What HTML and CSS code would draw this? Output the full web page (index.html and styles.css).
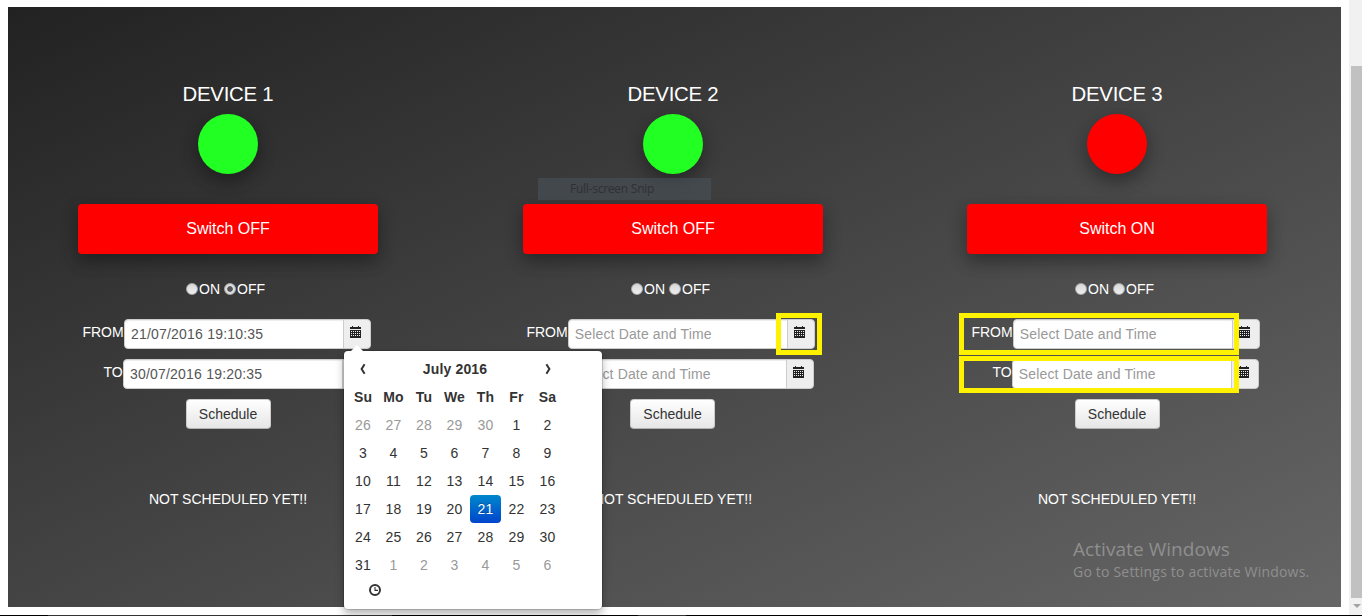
FILE: index.html
```html
<!DOCTYPE html>
<html lang="en">
<head>
<meta charset="utf-8">
<title>Device scheduler</title>
<link rel="stylesheet" href="styles.css">
</head>
<body>
<svg class="defs" aria-hidden="true">
  <symbol id="calendar" viewBox="0 0 12 12" shape-rendering="crispEdges">
    <path fill="#222" d="M2 0h1v1h5V0h1v1h2v2H0V1h2z"/>
    <path fill="#222" fill-rule="evenodd" d="M0 4h11v8H0zM1 5v1h1V5zm2 0v1h1V5zm2 0v1h1V5zm2 0v1h1V5zm2 0v1h1V5zM1 7v1h1V7zm2 0v1h1V7zm2 0v1h1V7zm2 0v1h1V7zm2 0v1h1V7zM1 9v1h1V9zm2 0v1h1V9zm2 0v1h1V9zm2 0v1h1V9zm2 0v1h1V9z"/>
  </symbol>
</svg>
<div class="page">
  <main class="panel">
    <section class="device">
      <h2 class="name">DEVICE 1</h2>
      <div class="lamp on"></div>
      <button class="switch">Switch OFF</button>
      <div class="radios"><i class="radio"></i><span>ON</span><i class="radio checked"></i><span>OFF</span></div>
      <div class="row from"><label>FROM</label><div class="field">21/07/2016 19:10:35</div><div class="addon"><svg><use href="#calendar"/></svg></div></div>
      <div class="row to"><label>TO</label><div class="field">30/07/2016 19:20:35</div><div class="addon"><svg><use href="#calendar"/></svg></div></div>
      <button class="schedule">Schedule</button>
      <p class="status">NOT SCHEDULED YET!!</p>
    </section>
    <section class="device second">
      <h2 class="name">DEVICE 2</h2>
      <div class="lamp on"></div>
      <button class="switch">Switch OFF</button>
      <div class="radios"><i class="radio"></i><span>ON</span><i class="radio"></i><span>OFF</span></div>
      <div class="row from"><label>FROM</label><div class="field empty">Select Date and Time</div><div class="addon"><svg><use href="#calendar"/></svg></div></div>
      <div class="row to"><label>TO</label><div class="field empty">Select Date and Time</div><div class="addon"><svg><use href="#calendar"/></svg></div></div>
      <button class="schedule">Schedule</button>
      <p class="status">NOT SCHEDULED YET!!</p>
    </section>
    <section class="device third">
      <h2 class="name">DEVICE 3</h2>
      <div class="lamp"></div>
      <button class="switch">Switch ON</button>
      <div class="radios"><i class="radio"></i><span>ON</span><i class="radio"></i><span>OFF</span></div>
      <div class="row from"><label>FROM</label><div class="field empty">Select Date and Time</div><div class="addon"><svg><use href="#calendar"/></svg></div></div>
      <div class="row to"><label>TO</label><div class="field empty">Select Date and Time</div><div class="addon"><svg><use href="#calendar"/></svg></div></div>
      <button class="schedule">Schedule</button>
      <p class="status">NOT SCHEDULED YET!!</p>
    </section>
  </main>
  <aside class="scrollbar"><div class="thumb"></div><div class="arrow"></div></aside>
</div>
<footer class="edge"></footer>

<div class="snip">Full-screen Snip</div>
<div class="watermark"><div class="big">Activate Windows</div><div class="small">Go to Settings to activate Windows.</div></div>
<div class="mark mark-icon"></div>
<div class="mark mark-from"></div>
<div class="mark mark-to"></div>

<div class="picker">
  <div class="grid">
    <svg class="nav" viewBox="0 0 8 12"><path d="M5.6 1.2L2.6 6L5.6 10.8"/></svg><b class="month">July 2016</b><svg class="nav" viewBox="0 0 8 12"><path d="M2.4 1.2L5.4 6L2.4 10.8"/></svg>
    <b>Su</b><b>Mo</b><b>Tu</b><b>We</b><b>Th</b><b>Fr</b><b>Sa</b>
    <span class="old">26</span><span class="old">27</span><span class="old">28</span><span class="old">29</span><span class="old">30</span><span>1</span><span>2</span>
    <span>3</span><span>4</span><span>5</span><span>6</span><span>7</span><span>8</span><span>9</span>
    <span>10</span><span>11</span><span>12</span><span>13</span><span>14</span><span>15</span><span>16</span>
    <span>17</span><span>18</span><span>19</span><span>20</span><span class="active">21</span><span>22</span><span>23</span>
    <span>24</span><span>25</span><span>26</span><span>27</span><span>28</span><span>29</span><span>30</span>
    <span>31</span><span class="old">1</span><span class="old">2</span><span class="old">3</span><span class="old">4</span><span class="old">5</span><span class="old">6</span>
  </div>
  <svg class="clock" viewBox="0 0 12 12"><circle cx="6" cy="6" r="5"/><path d="M6 3v3.4h3" /></svg>
</div>
</body>
</html>
```
FILE: styles.css
```css
* { box-sizing: border-box; }
body {
  margin: 0;
  width: 1362px;
  height: 616px;
  overflow: hidden;
  position: relative;
  background: #fff;
  color: #fff;
  font: 14px/20px "Liberation Sans", Arial, sans-serif;
}
.defs { display: none; }
.page { display: flex; height: 615px; padding-left: 8px; }
.panel {
  display: flex;
  width: 1333px;
  height: 600px;
  margin: 7px 8px 0 0;
  background: linear-gradient(to bottom right, #222, #666);
}
.device {
  flex: 0 0 444px;
  display: flex;
  flex-direction: column;
  align-items: center;
  padding: 72px 4px 0 0;
}
.device.second { flex-basis: 446px; }
.device.third { flex-basis: 442px; }
.name { margin: 0; font-size: 20.4px; font-weight: normal; line-height: 30px; letter-spacing: -.25px; }
.lamp {
  width: 60px;
  height: 60px;
  margin-top: 5px;
  border-radius: 50%;
  background: #f00;
  box-shadow: 0 8px 16px rgba(0,0,0,.2), 0 6px 20px rgba(0,0,0,.19);
}
.lamp.on { background: #22ff22; }
.switch {
  width: 300px;
  height: 50px;
  margin-top: 30px;
  padding: 0;
  border: 0;
  border-radius: 4px;
  background: #f00;
  color: #fff;
  font: 16px "Liberation Sans", Arial, sans-serif;
  box-shadow: 0 8px 16px rgba(0,0,0,.2), 0 6px 20px rgba(0,0,0,.19);
}
.radios { display: flex; align-items: center; width: 84px; height: 20px; margin: 25px 0 20px; }
.radios span { width: 25px; }
.radio {
  width: 12px;
  height: 12px;
  margin-right: 1px;
  border: 1px solid #aaa;
  border-radius: 50%;
  background: linear-gradient(#d8d8d8, #eee);
}
.radio.checked { background: radial-gradient(circle, #555 0 2.4px, #ddd 3.2px); }
.row { display: flex; width: 300px; height: 30px; margin-bottom: 10px; }
.from { padding-left: 4px; }
.to { padding-left: 3px; }
.second .from { padding-left: 3px; }
.second .to { padding-left: 2px; }
.row label { width: 42px; height: 26px; padding-right: .4px; line-height: 26px; text-align: right; white-space: nowrap; }
.field {
  width: 220px;
  padding: 4px 6px;
  border: 1px solid #ccc;
  border-radius: 4px 0 0 4px;
  background: #fff;
  color: #555;
  letter-spacing: .2px;
  box-shadow: inset 0 1px 1px rgba(0,0,0,.075);
}
.field.empty { padding-left: 5.8px; color: #999; letter-spacing: .15px; }
.addon {
  width: 28px;
  margin-left: -1px;
  padding: 6px;
  border: 1px solid #ccc;
  border-radius: 0 4px 4px 0;
  background: #eee;
}
.addon svg { display: block; width: 12px; height: 12px; }
.schedule {
  width: 85px;
  height: 30px;
  padding: 0;
  border: 1px solid #ccc;
  border-bottom-color: #b3b3b3;
  border-radius: 4px;
  background: linear-gradient(#fff, #e6e6e6);
  color: #333;
  font: 14px "Liberation Sans", Arial, sans-serif;
}
.second .schedule { margin-right: 1px; }
.status { margin: 60px 0 0; }
.scrollbar {
  display: flex;
  flex-direction: column;
  width: 13px;
  padding: 66px 0 0 2px;
  background: #f1f1f1;
}
.thumb { height: 532px; background: #c1c1c1; }
.arrow { margin: 6px 0 0 2px; width: 0; border: 4px solid transparent; border-top-color: #a3a3a3; border-bottom: 0; }
.edge {
  height: 1px;
  background: linear-gradient(90deg, #000 48px, #333 48px 392px, #000 392px 638px, #333 638px 686px, #000 686px);
}

.snip {
  position: absolute;
  left: 538px;
  top: 178px;
  width: 173px;
  height: 22px;
  padding-left: 32px;
  background: rgba(70,80,86,.65);
  color: #303134;
  font: 12px/22px "Open Sans", sans-serif;
  letter-spacing: -.25px;
  white-space: nowrap;
}
.watermark {
  position: absolute;
  left: 1073px;
  top: 536px;
  color: #8f8f8f;
  font-family: "Open Sans", sans-serif;
  white-space: nowrap;
}
.big { font-size: 19px; line-height: 26px; letter-spacing: .06px; }
.small { font-size: 14px; line-height: 20px; letter-spacing: .2px; }
.mark { position: absolute; border: 5px solid #fff200; }
.mark-icon { left: 776px; top: 313px; width: 46px; height: 42px; }
.mark-from { left: 959px; top: 313px; width: 280px; height: 42px; }
.mark-to { left: 959px; top: 356px; width: 280px; height: 37px; }

.picker {
  position: absolute;
  left: 344px;
  top: 351px;
  width: 258px;
  height: 258px;
  padding: 4px;
  border-radius: 4px;
  background: #fff;
  color: #333;
  box-shadow: 0 0 0 1px rgba(0,0,0,.15), 0 5px 10px rgba(0,0,0,.3);
}
.picker::before {
  content: "";
  position: absolute;
  left: 7px;
  top: -6px;
  border: 6px solid transparent;
  border-top: 0;
  border-bottom-color: #fff;
}
.grid {
  display: grid;
  grid-template-columns: 30px 31px 30px 31px 31px 31px 31px;
  grid-auto-rows: 28px;
  line-height: 28px;
  text-align: center;
  letter-spacing: .15px;
}
.month { grid-column: span 5; }
.nav { width: 8px; height: 12px; place-self: center; fill: none; stroke: #333; stroke-width: 2; }
.old { color: #999; }
.active {
  border-radius: 4px;
  background: linear-gradient(#08c, #04c);
  color: #fff;
  text-shadow: 0 -1px 0 rgba(0,0,0,.25);
}
.clock { display: block; width: 12px; height: 12px; margin: 5px 0 0 21px; fill: none; stroke: #333; stroke-width: 2; }
.clock path { stroke-width: 1.1; }
```
